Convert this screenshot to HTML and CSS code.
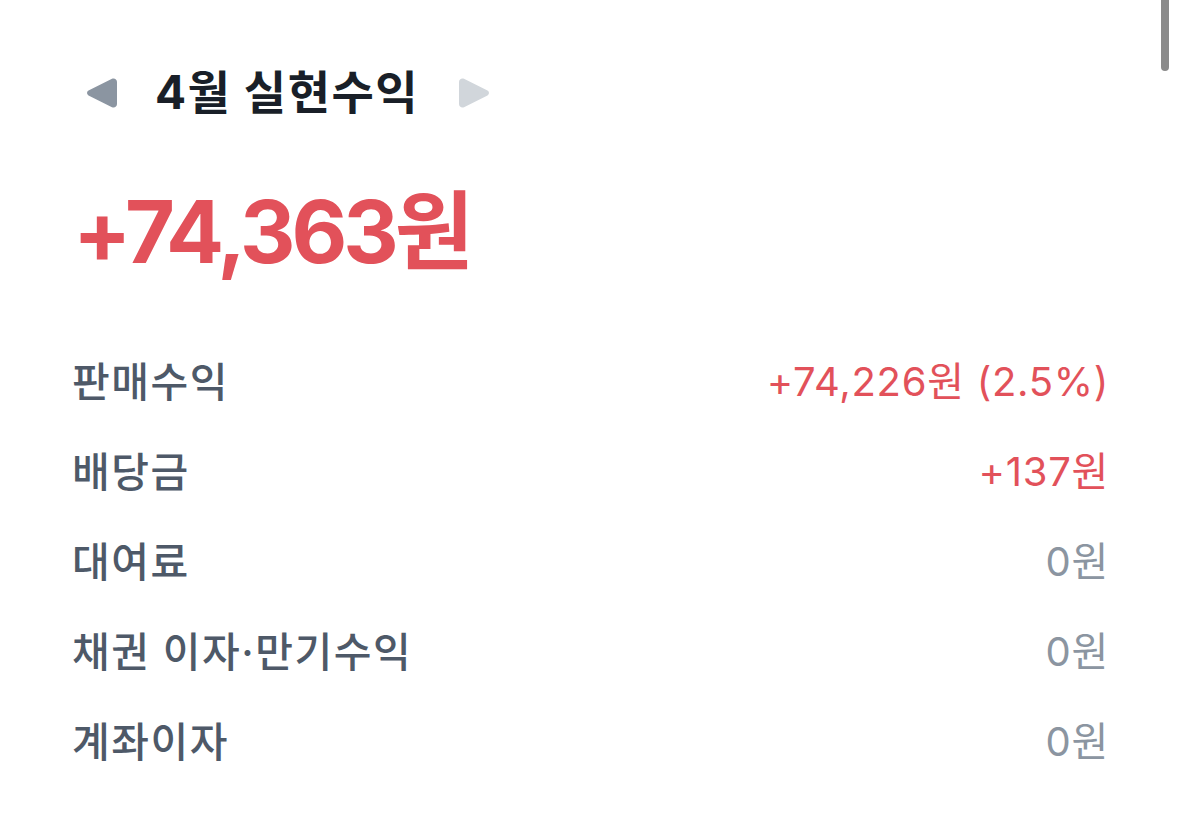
FILE: index.html
```html
<!DOCTYPE html>
<html lang="ko">
<head>
<meta charset="utf-8">
<link rel="stylesheet" href="styles.css">
</head>
<body>
<div class="scrollbar"></div>
<main class="page">
  <header class="month">
    <span class="arrow arrow-left"><svg width="32" height="32" viewBox="0 0 32 32"><path d="M2.5 13.6 L26 1.8 C28.3 0.7 31 2.3 31 4.9 V27.1 C31 29.7 28.3 31.3 26 30.2 L2.5 18.4 C0.5 17.4 0.5 14.6 2.5 13.6 Z" fill="#8b95a1"/></svg></span>
    <h1 class="month-title">4월 실현수익</h1>
    <span class="arrow arrow-right"><svg width="32" height="32" viewBox="0 0 32 32"><path d="M29.5 13.6 L6 1.8 C3.7 0.7 1 2.3 1 4.9 V27.1 C1 29.7 3.7 31.3 6 30.2 L29.5 18.4 C31.5 17.4 31.5 14.6 29.5 13.6 Z" fill="#d1d6db"/></svg></span>
  </header>
  <div class="total">+74,363원</div>
  <ul class="rows">
    <li class="row"><span class="label">판매수익</span><span class="value plus">+74,226원 (2.5%)</span></li>
    <li class="row"><span class="label">배당금</span><span class="value plus">+137원</span></li>
    <li class="row"><span class="label">대여료</span><span class="value zero">0원</span></li>
    <li class="row"><span class="label">채권 이자·만기수익</span><span class="value zero">0원</span></li>
    <li class="row"><span class="label">계좌이자</span><span class="value zero">0원</span></li>
  </ul>
</main>
</body>
</html>
```
FILE: styles.css
```css
html, body {
  margin: 0;
  padding: 0;
  background: #ffffff;
}
body {
  font-family: Inter, "Noto Sans CJK KR", sans-serif;
  width: 1179px;
  height: 838px;
  overflow: hidden;
  position: relative;
}
.scrollbar {
  position: absolute;
  top: 0;
  left: 1161px;
  width: 8px;
  height: 71px;
  background: #8a8a8a;
  border-radius: 0 0 4px 4px;
}
.page {
  padding: 0 70px 0 72px;
}
.month {
  display: flex;
  align-items: center;
  height: 60px;
  margin-top: 63px;
}
.arrow {
  display: flex;
  width: 32px;
  height: 32px;
}
.arrow-left {
  margin-left: 14px;
}
.month-title {
  margin: -3px 0 0 37px;
  font-size: 46px;
  font-weight: 700;
  color: #191f28;
  line-height: 1;
  letter-spacing: 1.5px;
}
.arrow-right {
  margin-left: 39px;
}
.total {
  margin-top: 66px;
  font-size: 86px;
  font-weight: 700;
  line-height: 1;
  color: #e2515a;
  letter-spacing: -4px;
  margin-left: 1px;
}
.rows {
  list-style: none;
  margin: 59px 0 0 0;
  padding: 0;
}
.row {
  display: flex;
  justify-content: space-between;
  align-items: center;
  height: 90px;
}
.label {
  font-size: 41px;
  font-weight: 500;
  color: #4e5968;
  letter-spacing: 1.5px;
}
.value {
  font-size: 40px;
  font-weight: 400;
  letter-spacing: 0.7px;
}
.plus { color: #e2515a; }
.zero { color: #8b95a1; }
```
